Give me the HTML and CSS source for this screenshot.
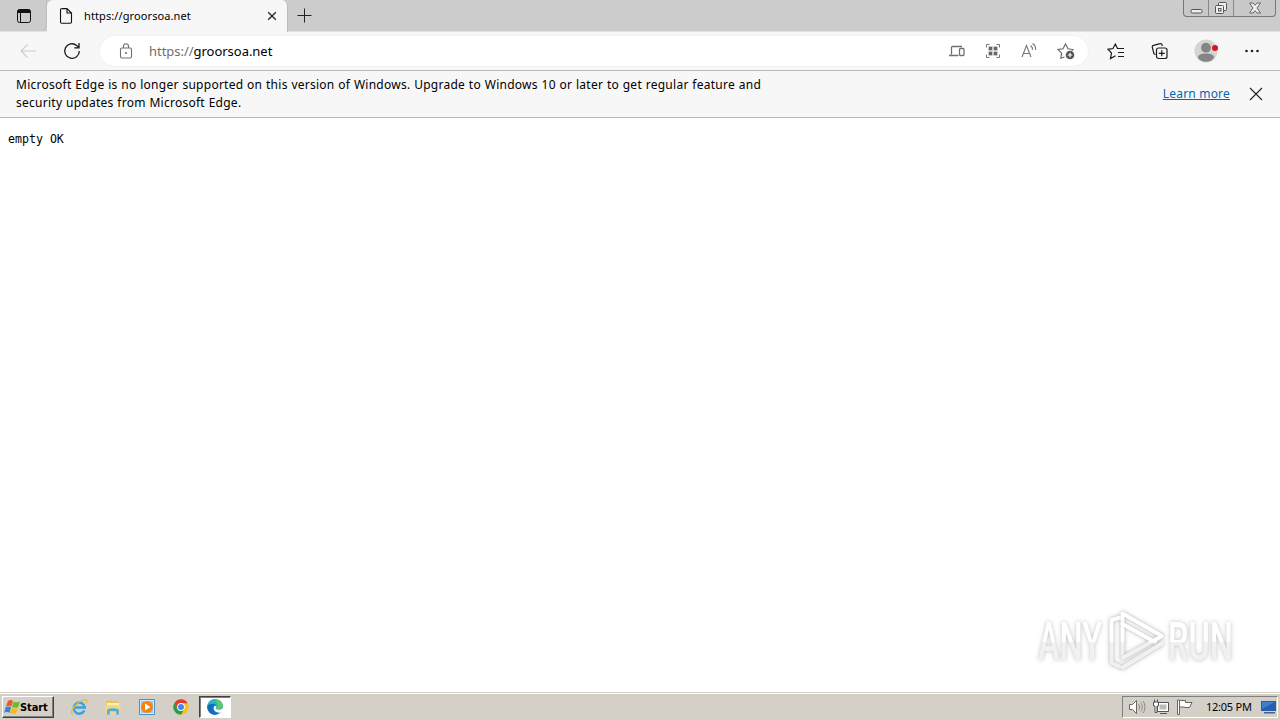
FILE: index.html
```html
<!DOCTYPE html>
<html lang="en">
<head>
<meta charset="utf-8">
<title>https://groorsoa.net</title>
<link rel="stylesheet" href="styles.css">
</head>
<body>
<div class="desktop">
	<div class="tabstrip">
		<div class="tab-actions">
			<svg width="16" height="16" viewBox="0 0 16 16"><rect x="1.5" y="1.5" width="13" height="13" rx="2" fill="none" stroke="#111"/><path d="M1.5 5V3a1.5 1.5 0 0 1 1.500-1.500h10A1.500 1.500 0 0 1 14.500 3v2z" fill="#111"/><path d="M4.500 5v9" stroke="#111"/></svg>
		</div>
		<div class="tab">
			<svg class="page-icon" width="14" height="16" viewBox="0 0 14 16" fill="none" stroke="#111" stroke-width="1.100"><path d="M2.500.6H8L12.500 5v9a1.200 1.200 0 0 1-1.200 1.200h-8.600A1.200 1.200 0 0 1 1.500 14V1.700A1.100 1.100 0 0 1 2.600.6M8 .6V5h4.500"/></svg>
			<span class="tab-title">https://groorsoa.net</span>
			<svg class="tab-close" width="10" height="10" viewBox="0 0 10 10" stroke="#222" stroke-width="1.300"><path d="M1.200 1.200l7.600 7.600M8.800 1.200L1.200 8.800"/></svg>
		</div>
		<svg class="new-tab" width="15" height="15" viewBox="0 0 15 15" stroke="#222"><path d="M7.500.5v14M.5 7.500h14"/></svg>
		<div class="caption">
			<span class="min"><svg width="13" height="14" viewBox="0 0 13 14"><rect x="1" y="8.500" width="11" height="3.500" rx="1.200" fill="#eee" stroke="#555"/></svg></span>
			<span class="max"><svg width="14" height="14" viewBox="0 0 14 14" fill="#eee" stroke="#555"><rect x="4.500" y="1.500" width="8" height="8" rx="1"/><rect x="1.500" y="4.500" width="8" height="8" rx="1"/><rect x="4.500" y="7.500" width="2.500" height="2.500"/></svg></span>
			<span class="close"><svg width="14" height="12" viewBox="0 0 14 12"><path d="M1.500 1h3.500l2 2.300L9 1h3.500L9 6l3.500 5H9L7 8.700 5 11H1.500L5 6z" fill="#eee" stroke="#666"/></svg></span>
		</div>
	</div>

	<div class="toolbar">
		<svg class="back" width="18" height="16" viewBox="0 0 18 16" fill="none" stroke="#ccc" stroke-width="1.100"><path d="M17 8H2M8.500 1.500L2 8l6.500 6.500"/></svg>
		<svg class="reload" width="18" height="18" viewBox="0 0 18 18" fill="none" stroke="#1b1b1b" stroke-width="1.300"><path d="M16.300 9A7.300 7.300 0 1 1 13.600 3.400L16 5.500M16 1v4.800h-4.800"/></svg>
		<div class="address">
			<svg class="lock" width="14" height="16" viewBox="0 0 14 16" fill="none" stroke="#707070" stroke-width="1.100"><rect x="1.500" y="5" width="11" height="10" rx="1.500"/><path d="M4.500 5V3.200a2.500 2.500 0 0 1 5 0V5"/><circle cx="7" cy="10" r=".9" fill="#555" stroke="none"/></svg>
			<span class="url"><span class="scheme">https://</span>groorsoa.net</span>
			<div class="address-icons">
				<svg width="18" height="16" viewBox="0 0 18 16" fill="none" stroke="#707070" stroke-width="1.300"><path d="M3.500 11.500V4.500a1 1 0 0 1 1-1H14M1 12.500h9.500"/><rect x="11.500" y="5.500" width="4.500" height="7" rx="1"/></svg>
				<svg width="16" height="16" viewBox="0 0 16 16" fill="none" stroke="#777"><path d="M4.500 1.500h-3v3M11.500 1.500h3v3M4.500 14.500h-3v-3M11.500 14.500h3v-3"/><path d="M3.500 3.500h4v4h-4zM8.500 3.500h4v4h-4zM3.500 8.500h4v4h-4zM8.500 8.500h4v4h-4z" fill="#666" stroke="#fff" stroke-width=".3"/></svg>
				<svg width="18" height="18" viewBox="0 0 18 18" fill="none" stroke="#777" stroke-width="1.100"><path d="M2 15L6.500 3.500 11 15M3.500 11.500h6M10.500 3.800a4 4 0 0 1 2 4M12.500 1.500a6.500 6.500 0 0 1 3 6.500"/></svg>
				<svg width="18" height="18" viewBox="0 0 18 18" fill="none" stroke="#666" stroke-width="1.100"><path d="M7.500 15l-3.700 1.300.8-5.200L1 7.500l5-.8L8.500 2 11 6.700l5 .8-1.200 1.200"/><circle cx="13" cy="13" r="4.300" fill="#555" stroke="none"/><path d="M13 10.800v4.400M10.800 13h4.400" stroke="#fff"/></svg>
			</div>
		</div>
		<svg class="favorites" width="18" height="18" viewBox="0 0 18 18" fill="none" stroke="#1b1b1b" stroke-width="1.200"><path d="M8.500 13.700l-5 2.800 1-5.500L1 7.300l5-.8L8.300 2l2.200 4.500H17M11 10.500h6M11 14.500h6"/></svg>
		<svg class="collections" width="18" height="18" viewBox="0 0 18 18" fill="none" stroke="#1b1b1b" stroke-width="1.200"><path d="M4.500 12.500L3 11.800 1.300 5.300a1.600 1.600 0 0 1 1.200-2L9 1.600a1.600 1.600 0 0 1 2 1.100l.4 1.300"/><rect x="5.500" y="6" width="10.500" height="10.500" rx="2"/><path d="M10.750 8.300v6M7.750 11.300h6"/></svg>
		<svg class="profile" width="24" height="24" viewBox="0 0 24 24"><circle cx="12" cy="12" r="11.500" fill="#d4d4d4"/><circle cx="12" cy="8.700" r="4.900" fill="#858585"/><path d="M4 18.500c0-3 3.500-4 8-4s8 1 8 4c-1.500 3-4.500 4.300-8 4.300S5.500 21.500 4 18.500z" fill="#858585"/><circle cx="21" cy="9" r="3" fill="#d9161f"/></svg>
		<svg class="more" width="16" height="4" viewBox="0 0 16 4" fill="#222"><circle cx="2.500" cy="2" r="1.300"/><circle cx="8" cy="2" r="1.300"/><circle cx="13.500" cy="2" r="1.300"/></svg>
	</div>

	<div class="infobar">
		<p class="message">Microsoft Edge is no longer supported on this version of Windows. Upgrade to Windows 10 or later to get regular feature and<br>security updates from Microsoft Edge.</p>
		<a class="learn" href="#">Learn more</a>
		<svg width="14" height="14" viewBox="0 0 14 14" stroke="#222" stroke-width="1.100"><path d="M1 1l12 12M13 1L1 13"/></svg>
	</div>

	<div class="page">
		<pre>empty OK</pre>
		<svg class="watermark" width="250" height="72" viewBox="0 0 250 72">
			<defs>
				<linearGradient id="shade" x1="0" y1="0" x2="0" y2="72" gradientUnits="userSpaceOnUse"><stop offset=".46" stop-color="#fff"/><stop offset=".46" stop-color="#f1f1f1"/></linearGradient>
			</defs>
			<text class="brand" x="8" y="51" textLength="64" lengthAdjust="spacingAndGlyphs">ANY</text>
			<path class="face" d="M90 8.500L81.500 11v43l9 4"/>
			<path class="face" d="M92.500 48V4.500L132 27"/>
			<path class="face" d="M92.500 15L125 33M132 27L92.500 49"/>
			<path class="face" d="M132 34.500L92.500 58.500"/>
			<text class="brand" x="138" y="51" textLength="65" lengthAdjust="spacingAndGlyphs">RUN</text>
		</svg>
	</div>

	<div class="taskbar">
		<div class="start">
			<svg width="17" height="16" viewBox="0 0 17 16"><path d="M4 2c2-1.500 3.500-1.200 5 0L7.300 7.500C6 6.500 4 6.300 2 7.500z" fill="#ee5a24"/><path d="M9.600 2.500c2 1.200 4 1.200 6.400-.5L14.300 8c-2 1.200-4 1-6.300 0z" fill="#75b72c"/><path d="M1.600 8.300c2-1.200 4-1 5.500 0L5.500 13.700c-1.700-1-3.500-1-5.300 0z" fill="#3487d8"/><path d="M7.700 8.800c2 1 4 1.200 6.400 0L12.500 14c-2 1.300-4 1.200-6.400 0z" fill="#f7bd1d"/></svg>
			<span>Start</span>
		</div>
		<div class="quick">
			<span class="app"><svg width="18" height="18" viewBox="0 0 18 18" fill="none"><path d="M14.300 12.500A5.500 5.500 0 1 1 14.800 9.500H5" stroke="#35a3df" stroke-width="2.500"/><path d="M2.500 16.500C-1 14 6 5 12 2.500c4-1.700 5.500-.5 4.500 2.500" stroke="#e9b83a" stroke-width="1.300"/></svg></span>
			<span class="app"><svg width="18" height="18" viewBox="0 0 18 18"><path d="M2 3l5-1 1.500 1.500H15V15H2z" fill="#e8c45c"/><path d="M3 5h12v5H3z" fill="#fff3b4"/><path d="M1.500 7h15v9h-15z" fill="#f2d984"/><path d="M3 16.500v-4c0-3 12-3 12 0v4h-2.800v-3.300H5.800v3.300z" fill="#58acd6"/></svg></span>
			<span class="app"><svg width="18" height="18" viewBox="0 0 18 18"><path d="M1.500 1.500h15v15h-15z" fill="#d6ecfa" stroke="#4b91c9"/><path d="M3 3h12v12H3z" fill="#9bcbea"/><circle cx="9" cy="9" r="6" fill="#f28415"/><path d="M7 5.500L12.500 9 7 12.500z" fill="#fff"/></svg></span>
			<span class="app"><svg width="18" height="18" viewBox="0 0 18 18"><circle cx="9" cy="9" r="7.700" fill="#fbc116"/><path d="M2.330 5.150A7.700 7.700 0 0 1 15.670 5.150H9L5.670 10.900z" fill="#e33b2e"/><path d="M2.330 5.150A7.700 7.700 0 0 0 9 16.700l3.330-5.800L9 12.500l-3.330-1.600z" fill="#269c4c"/><circle cx="9" cy="9" r="3.900" fill="#fff"/><circle cx="9" cy="9" r="3" fill="#4285f4"/></svg></span>
			<span class="app active"><svg width="18" height="18" viewBox="0 0 18 18"><circle cx="9" cy="9" r="7.800" fill="#1575c4"/><path d="M1.300 8C2 3.800 5 1.200 9 1.200c5 0 7.800 3.500 7.800 6.500 0 2.500-2 3.800-4.300 3.800-2 0-3-.8-2.500-1.800 1.300-2.500-1-4-3.300-4C4.200 5.700 2 6.500 1.300 8z" fill="#2eb5c0"/><path d="M16.800 7.700c0 2.500-2 3.800-4.300 3.800-1 0-1.800-.3-2.200-.7C12 9 12 5 9.500 2c3.500-1 7 1.500 7.300 5.700z" fill="#5cc96a"/><path d="M8 8.500C9 7 11 8 10 9.700c-.5 1.300.8 2 2.500 2 1.700 0 3.500-.6 4.500-2l.5 4-1.500.5c-2 .7-5 .8-6.800-.9C7.500 12 7.300 10 8 8.500z" fill="#fff"/><path d="M1.300 8C3.500 6 7 6 8 7.300c-3 1-3 7 3 9C6 17.800 1 14 1.300 8z" fill="#146cbb"/></svg></span>
		</div>
		<div class="tray">
			<svg width="18" height="16" viewBox="0 0 18 16" fill="#fff" stroke="#666"><path d="M1.500 5.500h3l4-4v13l-4-4h-3z"/><path d="M10.500 5c1.300 1.500 1.300 4.500 0 6M12.700 3.500c2 2.500 2 6.500 0 9M15 2c2.500 3 2.500 9 0 12" fill="none" stroke="#888"/></svg>
			<svg width="18" height="16" viewBox="0 0 18 16" fill="#fff" stroke="#555"><path d="M5.500 3.500h11v9h-11zM8 14.500h7"/><path d="M7.500 5.500h7v5h-7z" fill="#bbb" stroke="none"/><path d="M2.500.5v3M5.500.5v3M1.500 3h5v4h-1.500v6.500H3V7H1.500z"/></svg>
			<svg width="18" height="16" viewBox="0 0 18 16" fill="#fff" stroke="#666"><path d="M1.500 1h2v14.500h-2z"/><path d="M3.500 1.500h6v2h6.500l-2.500 5h-5V8h-5z"/></svg>
			<span class="clock">12:05 PM</span>
			<svg class="show-desktop" width="17" height="16" viewBox="0 0 17 16"><path d="M1 2h15v10H1z" fill="#255fae"/><path d="M2 3h13L2 10z" fill="#3f80cc"/><path d="M4 13h11v1.500H4z" fill="#40658f"/></svg>
		</div>
	</div>
</div>
</body>
</html>
```
FILE: styles.css
```css
*{box-sizing:border-box;}
body{margin:0;overflow:hidden;background:#fff;color:#000;font:12px "Noto Sans","Open Sans",sans-serif;}
svg{display:block;flex:none;}
.desktop{width:1280px;height:720px;display:flex;flex-direction:column;}
.tabstrip{height:32px;flex:none;display:flex;background:#ccc;border-bottom:1px solid #e4e4e4;}
.tab-actions{width:47px;padding:8px 0 0 16px;border-right:1px solid #bcbcbc;border-radius:0 0 6px 0;}
.tab{width:241px;height:32px;display:flex;align-items:center;background:#f7f7f7;border-right:1px solid #bcbcbc;border-radius:6px 6px 0 0;padding:0 10px 0 12px;}
.tab-title{margin-left:11px;padding-bottom:2px;font-size:11px;letter-spacing:.1px;white-space:nowrap;}
.tab-close{margin-left:auto;}
.new-tab{margin:8px 0 0 9px;}
.caption{display:flex;width:93px;height:17px;margin:0 4px 0 auto;border:1px solid #777;border-top:0;border-radius:0 0 4px 4px;background:#c8c8c8;}
.caption span{display:flex;justify-content:center;align-items:center;border-right:1px solid #888;}
.caption .min,.caption .max{width:25px;}
.caption .close{flex:1;border-right:0;}

.toolbar{height:39px;flex:none;display:flex;align-items:center;background:#f7f7f7;border-bottom:1px solid #b8b8b8;}
.back{margin-left:19px;}
.reload{margin-left:26px;}
.address{width:988px;height:30px;margin-left:19px;padding:0 13px 0 19px;display:flex;align-items:center;background:#fff;border-radius:15px;box-shadow:0 0 0 1px #f2f2f2;}
.url{margin-left:16px;font-size:13px;letter-spacing:-.03px;white-space:nowrap;}
.scheme{color:#707070;}
.address-icons{margin-left:auto;display:flex;align-items:center;gap:19px;}
.favorites{margin-left:19px;}
.collections{margin-left:26px;}
.profile{margin-left:25px;}
.more{margin-left:26px;}

.infobar{height:47px;flex:none;display:flex;align-items:center;background:#f7f7f7;border-bottom:1px solid #b8b8b8;padding:0 17px 0 16px;}
.message{margin:0;font-size:12px;line-height:18px;letter-spacing:.26px;word-spacing:.35px;white-space:nowrap;}
.learn{margin:0 19px 0 auto;padding-bottom:2px;font-size:12px;letter-spacing:.2px;color:#0067b0;text-decoration:underline;white-space:nowrap;}

.page{flex:1;position:relative;background:#fff;}
.page pre{margin:0;padding:14px 8px;font:11.600px/15px "DejaVu Sans Mono",monospace;}
.watermark{position:absolute;left:1030px;top:491px;filter:drop-shadow(0 0 2px rgba(0,0,0,.25));}
.brand{font:500 53px Roboto,sans-serif;fill:url(#shade);}
.face{fill:none;stroke:url(#shade);stroke-width:4;stroke-linejoin:round;stroke-linecap:round;filter:drop-shadow(0 0 1px rgba(0,0,0,.12));}

.taskbar{height:28px;flex:none;display:flex;align-items:center;background:#d4d0c8;border-top:1px solid #d4d0c8;box-shadow:inset 0 1px #fff;padding:1px 2px 0;}
.start{width:52px;height:22px;display:flex;align-items:center;padding-left:1px;border:1px solid;border-color:#fff #404040 #404040 #fff;box-shadow:inset -1px -1px #808080;font:bold 11px "DejaVu Sans Condensed","DejaVu Sans",sans-serif;letter-spacing:-.1px;}
.start span{margin-left:-1px;}
.quick{display:flex;margin-left:9px;gap:2px;}
.app{width:32px;height:22px;display:flex;align-items:center;justify-content:center;}
.active{background:#fff;border:1px solid;border-color:#404040 #fff #fff #404040;box-shadow:inset 1px 1px #808080;}
.tray{width:156px;height:22px;margin-left:auto;display:flex;align-items:center;border:1px solid;border-color:#808080 #fff #fff #808080;padding-left:5px;gap:6px;}
.clock{margin-left:6px;padding-bottom:2px;font-size:11px;letter-spacing:-.25px;white-space:nowrap;}
.show-desktop{margin:0 0 0 auto;}
```
